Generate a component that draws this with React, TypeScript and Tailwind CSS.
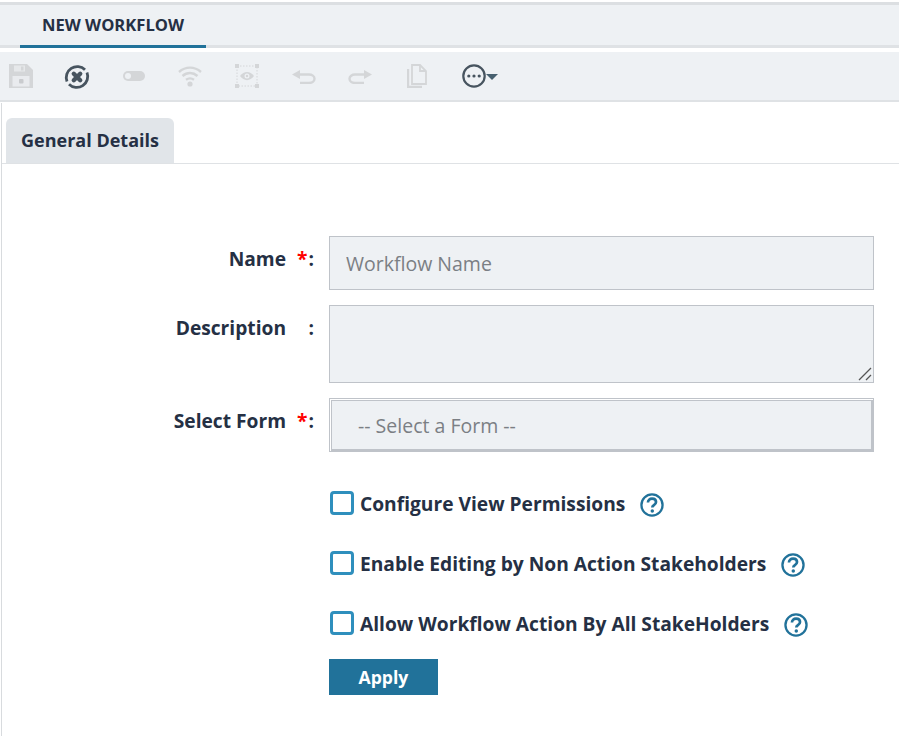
import React from 'react';

const FONT = "font-['Open_Sans',sans-serif]";

const HelpIcon = () => (
  <svg width="24" height="24" viewBox="0 0 25 25" fill="none" className="shrink-0 mt-[2px]">
    <circle cx="12.5" cy="12.5" r="11" stroke="#21729a" strokeWidth="2.4" />
    <path d="M8.300 9.800c0-2.400 1.800-3.900 4.300-3.900s4.100 1.400 4.100 3.500c0 1.700-1 2.500-2.200 3.300-1.100.7-1.700 1.200-1.700 2.500" stroke="#21729a" strokeWidth="2.800" />
    <circle cx="12.800" cy="18.800" r="1.800" fill="#21729a" />
  </svg>
);

const SaveIcon = () => (
  <svg width="24" height="24" viewBox="0 0 24 24">
    <path fill="#d4d6d8" d="M0 0h18l6 6v18H0z" />
    <path fill="#e6e8ea" d="M5 1.500h11v6H5z" />
    <rect x="12" y="2.500" width="2.500" height="4" fill="#d4d6d8" />
    <path fill="#e9ebee" d="M3.500 12h17v10.500h-17z" />
    <rect x="10" y="15" width="4.500" height="4.500" rx="1" fill="#c9cbce" />
  </svg>
);

const CloseIcon = () => (
  <svg width="26" height="26" viewBox="0 0 26 26" fill="none" className="mt-px">
    <path d="M21 5.800A11 11 0 0 0 3 17.600" stroke="#47545f" strokeWidth="2.800" />
    <path d="M5 20.200A11 11 0 0 0 23 8.400" stroke="#47545f" strokeWidth="2.800" />
    <path d="M9.800 9.800l6.400 6.400M16.200 9.800l-6.400 6.400" stroke="#47545f" strokeWidth="4.400" strokeLinecap="round" />
  </svg>
);

const ToggleIcon = () => (
  <svg width="22" height="10" viewBox="0 0 22 10">
    <rect width="22" height="10" rx="5" fill="#d4d6d8" />
    <circle cx="5" cy="5" r="3" fill="#eef1f4" />
  </svg>
);

const WifiIcon = () => (
  <svg width="24" height="21" viewBox="0 0 24 21" fill="none" stroke="#d4d6d8" strokeWidth="2.400">
    <path d="M1 6c6.500-5.800 15.500-5.800 22 0" />
    <path d="M4.500 10c4.500-4 10.500-4 15 0" />
    <path d="M8 13.800c2.500-1.800 5.500-1.800 8 0" />
    <circle cx="12" cy="18" r="2.600" fill="#d4d6d8" stroke="none" />
  </svg>
);

const PreviewIcon = () => (
  <svg width="24" height="24" viewBox="0 0 24 24" fill="none">
    <rect x="2" y="2" width="20" height="20" stroke="#d4d6d8" strokeWidth="1" strokeDasharray="1.500 1.500" />
    <rect width="4" height="4" fill="#d4d6d8" />
    <rect x="20" width="4" height="4" fill="#d4d6d8" />
    <rect y="20" width="4" height="4" fill="#d4d6d8" />
    <rect x="20" y="20" width="4" height="4" fill="#d4d6d8" />
    <path d="M5 12c4-5.500 10-5.500 14 0-4 5.500-10 5.500-14 0z" fill="#d4d6d8" />
    <circle cx="12" cy="12" r="2.500" fill="#eef1f4" />
    <circle cx="12" cy="12" r="1.200" fill="#d4d6d8" />
  </svg>
);

const UndoIcon = () => (
  <svg width="24" height="14" viewBox="0 0 24 14" fill="none" className="mt-[1px]">
    <path d="M0 4.500L8 0v9z" fill="#d4d6d8" />
    <path d="M7 4.500h10c3 0 5.500 1.800 5.500 4.300S20 13 17 13H8" stroke="#d4d6d8" strokeWidth="2.400" />
  </svg>
);

const RedoIcon = () => (
  <svg width="24" height="14" viewBox="0 0 24 14" fill="none" className="mt-[1px]">
    <path d="M24 4.500L16 0v9z" fill="#d4d6d8" />
    <path d="M17 4.500H7C4 4.500 1.500 6.300 1.500 8.800S4 13 7 13h9" stroke="#d4d6d8" strokeWidth="2.400" />
  </svg>
);

const CopyIcon = () => (
  <svg width="20" height="24" viewBox="0 0 20 24" fill="none" stroke="#d4d6d8" strokeWidth="1.800">
    <path d="M5 1h8l6 6v13H5z" />
    <path d="M13 1v6h6" />
    <path d="M1 5v18h14" strokeWidth="2.400" />
  </svg>
);

const MoreIcon = () => (
  <svg width="36" height="24" viewBox="0 0 36 24" fill="none">
    <circle cx="12" cy="12" r="10.700" stroke="#47545f" strokeWidth="2.200" />
    <circle cx="6.800" cy="12" r="1.600" fill="#47545f" />
    <circle cx="12" cy="12" r="1.600" fill="#47545f" />
    <circle cx="17.200" cy="12" r="1.600" fill="#47545f" />
    <path d="M24 10h12l-6 6z" fill="#47606f" />
  </svg>
);

const FormRow = ({ label, required, children }: { label: string; required?: boolean; children: React.ReactNode }) => (
  <div className="flex items-start">
    <div className="w-[329px] shrink-0 flex justify-end pt-[11px] pr-[15px] text-[19.200px] font-bold text-[#253044] leading-[24px]">
      <span>{label}</span>
      <span className="w-[28px] flex justify-between pl-[11px]">
        <span className="text-[#ff0000]">{required ? '*' : ''}</span>
        <span>:</span>
      </span>
    </div>
    {children}
  </div>
);

const CheckRow = ({ label }: { label: string }) => (
  <label className="flex items-center h-[30px]">
    <span className="w-[24px] h-[24px] rounded-[4px] border-[3px] border-[#2f8fbd] bg-white shrink-0 ml-px -mt-[2px]" />
    <span className="ml-[6px] mr-[15px] text-[19.200px] font-bold text-[#253044]">{label}</span>
    <HelpIcon />
  </label>
);

export default function App() {
  return (
    <div className={`w-[899px] h-[736px] overflow-hidden bg-white ${FONT}`}>
      <div className="h-[2px]" />
      <div className="h-[3px] bg-[#dcdfe2]" />
      <div className="h-[43px] bg-[#eef1f4] border-b-[3px] border-[#dfe2e5] pl-[20px]">
        <div className="w-[186px] h-[43px] border-b-[3px] border-[#21729a] text-center text-[16.600px] leading-[40px] font-bold text-[#253044]">
          NEW WORKFLOW
        </div>
      </div>
      <div className="h-[4px]" />
      <div className="h-[50px] bg-[#eef1f4] border-b-2 border-[#dfe2e5] flex items-center pl-[9px]">
        <div className="w-[55px]"><SaveIcon /></div>
        <div className="w-[59px]"><CloseIcon /></div>
        <div className="w-[55px]"><ToggleIcon /></div>
        <div className="w-[57px]"><WifiIcon /></div>
        <div className="w-[57px]"><PreviewIcon /></div>
        <div className="w-[56px]"><UndoIcon /></div>
        <div className="w-[59px]"><RedoIcon /></div>
        <div className="w-[55px]"><CopyIcon /></div>
        <MoreIcon />
      </div>
      <div className="ml-px mt-px border-l border-[#d8dbde] h-[634px]">
        <div className="h-[61px] pt-[15px] pl-[4px] border-b border-[#dfe2e5]">
          <div className="w-[168px] h-[45px] rounded-t-[6px] bg-[#e1e5e9] text-[18px] leading-[44px] font-bold text-center text-[#253044]">
            General Details
          </div>
        </div>
        <div className="-ml-[2px] pt-[72px] flex flex-col">
          <FormRow label="Name" required>
            <input
              placeholder="Workflow Name"
              readOnly
              className="w-[545px] h-[54px] px-[16px] bg-[#eef1f4] border border-[#bfc3c9] text-[19.500px] placeholder:text-[#7b7f84] outline-none"
            />
          </FormRow>
          <div className="h-[15px]" />
          <FormRow label="Description">
            <div className="relative w-[545px] h-[78px]">
              <textarea
                readOnly
                className="block w-full h-full resize-none bg-[#eef1f4] border border-[#bfc3c9] outline-none"
              />
              <svg width="14" height="14" viewBox="0 0 14 14" className="absolute right-[2px] bottom-[2px]" fill="none" stroke="#555" strokeWidth="1.300">
                <path d="M1 13L13 1M8 13l5-5" />
              </svg>
            </div>
          </FormRow>
          <div className="h-[15px]" />
          <FormRow label="Select Form" required>
            <div className="w-[545px] h-[54px] border border-[#bfc3c9] pt-px pl-px">
              <div className="h-full border-r-2 border-b-2 border-l border-t border-[#bfc3c9] bg-[#eef1f4] pl-[26px] text-[19.500px] leading-[50px] text-[#7b7f84]">
                -- Select a Form --
              </div>
            </div>
          </FormRow>
          <div className="ml-[329px] mt-[37px] flex flex-col gap-[30px]">
            <CheckRow label="Configure View Permissions" />
            <CheckRow label="Enable Editing by Non Action Stakeholders" />
            <CheckRow label="Allow Workflow Action By All StakeHolders" />
            <button className="-mt-[10px] w-[109px] h-[36px] bg-[#21729a] text-white text-[17.600px] font-bold">
              Apply
            </button>
          </div>
        </div>
      </div>
    </div>
  );
}
